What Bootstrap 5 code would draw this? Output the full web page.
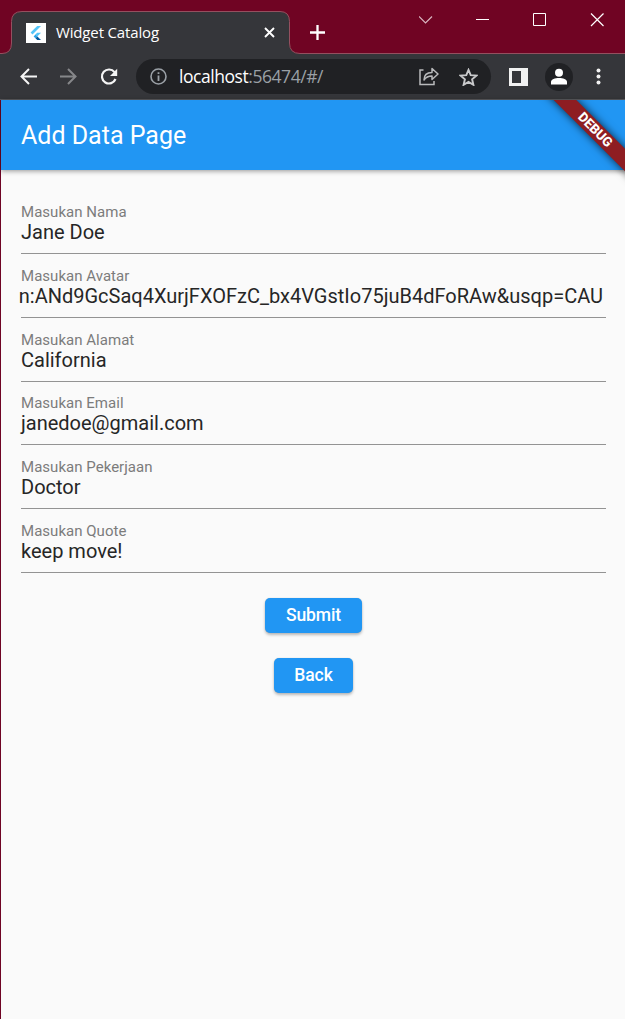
<!DOCTYPE html>
<html lang="id">
<head>
<meta charset="utf-8">
<meta name="viewport" content="width=device-width, initial-scale=1">
<title>Widget Catalog</title>
<link href="https://cdn.jsdelivr.net/npm/bootstrap@5.3.0/dist/css/bootstrap.min.css" rel="stylesheet">
<style>
  html, body { height: 100%; }
  body { font-family: Roboto, sans-serif; background: #fafafa; line-height: 1; overflow: hidden; }
  svg { display: block; flex: none; }
  .window-frame { border-left: 1px solid #6f0424; }
  .chrome-ui { font-family: "Open Sans", "Noto Sans", sans-serif; margin-left: -1px; }
  .tabstrip { height: 54px; background: #700423; }
  .tab-shape { position: absolute; left: 0; top: 0; }
  .tab-body { width: 278px; margin-left: 12px; padding: 11px 15px 0 14px; height: 54px; z-index: 1; }
  .tab-title { font-size: 15px; color: #fff; margin-left: 10px; white-space: nowrap; letter-spacing: -.15px; }
  .new-tab { margin: 11px 0 0 20px; z-index: 1; }
  .win-controls { height: 39px; padding-right: 21px; gap: 43px; z-index: 1; }
  .toolbar { height: 46px; background: #35363a; border-bottom: 1px solid #5b5b5f; padding: 0 24px 0 20px; }
  .address { width: 355px; height: 35px; background: #202124; margin-left: 18px; padding: 0 13px 0 14px; }
  .address-text { font-size: 17.5px; color: #fff; margin-left: 12px; letter-spacing: -.45px; white-space: nowrap; }
  .address-text span { color: #9aa0a6; }
  .avatar-dot { width: 28px; height: 28px; background: #202124; margin-left: 17px; }
  .appbar { height: 70px; background: #2196f3; padding-left: 20px; box-shadow: 0 1px 5px rgba(0,0,0,.42); }
  .appbar h1 { font-size: 25px; font-weight: 400; letter-spacing: 0; line-height: 1; color: #fff; }
  .debug-corner { position: absolute; right: 0; top: 0; width: 100px; height: 100px; overflow: hidden; }
  .debug-band { position: absolute; left: -4.6px; top: 21.7px; width: 150px; height: 16px; transform: rotate(45deg);
    background: #8e1d22; box-shadow: 0 0 9px rgba(0,0,0,.75); color: #fff; font-size: 13.3px; font-weight: 800; line-height: 16px; text-align: center; }
  .data-form { padding: 20.2px 19px 0 20px; }
  .line-field { height: 63.8px; border-bottom: 1px solid #939393; padding-top: 13.8px; }
  .line-field label { display: block; font-size: 15px; line-height: 16px; margin-bottom: -1px; color: #7c7c7c; letter-spacing: .03px; }
  .line-field .form-control-plaintext { font-size: 20px; line-height: 24px; padding: 0; color: #262626; letter-spacing: 0; outline: 0; height: 24px; white-space: nowrap; }
  .btn-raised { --bs-btn-color: #fff; --bs-btn-bg: #2196f3; --bs-btn-border-width: 0; --bs-btn-hover-bg: #1e88e5; --bs-btn-hover-color: #fff;
    font-size: 17.5px; font-weight: 500; line-height: 35px; padding: 0 20.4px; border-radius: 5px; height: 35px;
    box-shadow: 0 2px 3px rgba(0,0,0,.26), 0 0 1px rgba(0,0,0,.2); }
  .form-actions { padding-top: 25px; gap: 25px; }
  .btn-submit { padding: 0 20.8px; letter-spacing: -.1px; }
</style>
</head>
<body>
<div class="window-frame h-100 d-flex flex-column">
  <header class="chrome-ui">
    <div class="tabstrip position-relative d-flex">
      <svg class="tab-shape" width="625" height="54" viewBox="0 0 625 54">
        <path d="M0 53.5H2Q11.5 53.5 11.5 43V21.5Q11.5 11.5 22 11.5H280Q289.500 11.500 289.500 21.500V43Q289.500 53.500 300 53.500H626V56H0Z" fill="#35363a" stroke="#94505f"/>
      </svg>
      <div class="tab-body d-flex align-items-center position-relative">
        <svg width="20" height="20" viewBox="0 0 20 20"><path fill="#fff" d="M0 0h20v20H0z"/><path fill="#54c5f8" d="M11.200 3H15L6.500 11.500 4.600 9.600z"/><path fill="#54c5f8" d="M11.200 9.700H15L11.300 13.500 9.400 11.600z"/><path fill="#29a4e8" d="M7.600 13.400 9.500 11.500 11.400 13.400 9.500 15.300z"/><path fill="#01579b" d="M9.500 15.300 11.400 13.400 15 17H11.200z"/></svg>
        <span class="tab-title">Widget Catalog</span>
        <svg class="ms-auto" width="11" height="11" viewBox="0 0 11 11" stroke="#fff" stroke-width="1.900"><path d="M1 1l9 9M10 1l-9 9"/></svg>
      </div>
      <svg class="new-tab align-self-center" width="15" height="15" viewBox="0 0 15 15" stroke="#fff" stroke-width="2.300"><path d="M7.500 0v15M0 7.500h15"/></svg>
      <div class="win-controls d-flex align-items-center ms-auto position-relative">
        <svg width="14" height="14" viewBox="0 0 14 14" fill="none" stroke="#d9b6c0" stroke-width="1.200"><path d="M0 3.500 6.500 10 13 3.500"/></svg>
        <svg width="14" height="14" viewBox="0 0 14 14"><path fill="#fff" d="M0 6h13v1H0z"/></svg>
        <svg width="14" height="14" viewBox="0 0 14 14" fill="none" stroke="#fff"><path d="M.5.5h12v12H.5z"/></svg>
        <svg width="14" height="14" viewBox="0 0 14 14" stroke="#fff" stroke-width="1.200"><path d="M1 .5l12.500 12.500M13.500 .5 1 13"/></svg>
      </div>
    </div>
    <div class="toolbar d-flex align-items-center">
      <svg width="17" height="17" viewBox="0 0 17 17" fill="none" stroke="#f5f5f5" stroke-width="2"><path d="M17 8.500H2M9 1 1.500 8.500 9 16"/></svg>
      <svg style="margin-left:23px" width="17" height="17" viewBox="0 0 17 17" fill="none" stroke="#86878a" stroke-width="2"><path d="M0 8.500h15M8 1l7.500 7.500L8 16"/></svg>
      <svg style="margin-left:23px" width="18" height="18" viewBox="0 0 18 18"><path fill="none" stroke="#f5f5f5" stroke-width="2.200" d="M14.500 4.200A7 7 0 1 0 15.500 11"/><path fill="#f5f5f5" d="M17.200.7v7.200H10z"/></svg>
      <div class="address rounded-pill d-flex align-items-center">
        <svg width="17" height="17" viewBox="0 0 17 17"><circle cx="8.500" cy="8.500" r="7.500" fill="none" stroke="#9aa0a6" stroke-width="1.600"/><path fill="#9aa0a6" d="M7.600 7.500h1.800V13H7.600zM7.600 4.200h1.800V6H7.600z"/></svg>
        <div class="address-text">localhost<span>:56474/#/</span></div>
        <svg class="ms-auto" width="20" height="19" viewBox="0 0 20 19" fill="none" stroke="#b9babc" stroke-width="1.500"><path d="M4.500 3H1v14.500h14V14"/><path d="M5 13C5 8 8 5.500 13 5.500V1.500l6 5.500-6 5.500v-3.500C9.500 9 7 10 5 13z" stroke-linejoin="round"/></svg>
        <svg style="margin-left:20px" width="19" height="18" viewBox="0 0 19 18" fill="none" stroke="#c8c9cb" stroke-width="1.900"><path d="M9.500 1.900l2.200 5.200 5.700.5-4.300 3.700 1.300 5.500-4.900-2.900-4.900 2.900 1.300-5.500L1.600 7.600l5.700-.5z"/></svg>
      </div>
      <svg style="margin-left:18px" width="19" height="18" viewBox="0 0 19 18"><path fill="#f1f1f1" fill-rule="evenodd" d="M0 0h19v18H0zM3 3v12h9V3z"/></svg>
      <div class="avatar-dot rounded-circle d-flex align-items-center justify-content-center">
        <svg width="16" height="17" viewBox="0 0 16 17" fill="#fff"><circle cx="8" cy="4.700" r="4"/><path d="M0 16.500v-2.500C0 11.200 4 10 8 10s8 1.200 8 4v2.500z"/></svg>
      </div>
      <svg class="ms-auto" width="5" height="17" viewBox="0 0 5 17" fill="#f1f1f1"><circle cx="2.500" cy="2.500" r="2"/><circle cx="2.500" cy="8.500" r="2"/><circle cx="2.500" cy="14.500" r="2"/></svg>
    </div>
  </header>

  <main class="flex-grow-1 position-relative">
    <div class="appbar d-flex align-items-center"><h1 class="m-0">Add Data Page</h1></div>
    <div class="debug-corner"><div class="debug-band">DEBUG</div></div>

    <form class="data-form">
      <div class="line-field"><label>Masukan Nama</label><div class="form-control-plaintext">Jane Doe</div></div>
      <div class="line-field"><label>Masukan Avatar</label><div class="form-control-plaintext d-flex justify-content-end" style="margin-left:-2px;padding-right:1px">n:ANd9GcSaq4XurjFXOFzC_bx4VGstIo75juB4dFoRAw&amp;usqp=CAU</div></div>
      <div class="line-field"><label>Masukan Alamat</label><div class="form-control-plaintext">California</div></div>
      <div class="line-field"><label>Masukan Email</label><div class="form-control-plaintext">janedoe@gmail.com</div></div>
      <div class="line-field"><label>Masukan Pekerjaan</label><div class="form-control-plaintext">Doctor</div></div>
      <div class="line-field"><label>Masukan Quote</label><div class="form-control-plaintext">keep move!</div></div>
      <div class="form-actions d-flex flex-column align-items-center">
        <button type="button" class="btn btn-raised btn-submit">Submit</button>
        <button type="button" class="btn btn-raised">Back</button>
      </div>
    </form>
  </main>
</div>
<script src="https://cdn.jsdelivr.net/npm/bootstrap@5.3.0/dist/js/bootstrap.bundle.min.js"></script>
</body>
</html>
